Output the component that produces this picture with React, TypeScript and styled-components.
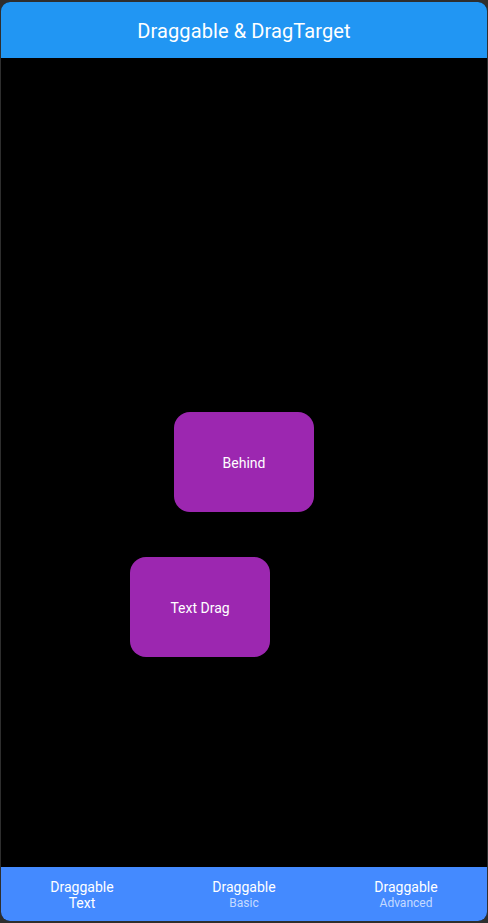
import React from "react";
import styled, { createGlobalStyle } from "styled-components";

const Global = createGlobalStyle`
  html, body { margin: 0; padding: 0; background: #2e2e2e; }
  body { font-family: Roboto, "Noto Sans", sans-serif; }
  #root { width: 488px; height: 923px; }
`;

const Frame = styled.div`
  box-sizing: border-box;
  width: 488px;
  height: 923px;
  padding: 2px 1px 2px 1px;
  background: #2e2e2e;
`;

const Screen = styled.div`
  height: 100%;
  display: flex;
  flex-direction: column;
  border-radius: 9px;
  overflow: hidden;
  background: #000;
`;

const AppBar = styled.header`
  box-sizing: border-box;
  height: 56px;
  flex: 0 0 56px;
  padding-top: 2px;
  background: #2196f3;
  display: flex;
  align-items: center;
  justify-content: center;
  color: #fff;
  font-size: 20px;
  font-weight: 400;
  letter-spacing: 0.1px;
`;

const Canvas = styled.main`
  flex: 1;
  position: relative;
  background: #000;
`;

const Tile = styled.div<{ $x: number; $y: number }>`
  position: absolute;
  left: ${(p) => p.$x}px;
  top: ${(p) => p.$y}px;
  width: 140px;
  height: 100px;
  border-radius: 16px;
  background: #9c27b0;
  color: #fff;
  font-size: 14px;
  display: flex;
  align-items: center;
  justify-content: center;
  padding-top: 1px;
  box-sizing: border-box;
`;

const NavBar = styled.nav`
  height: 54px;
  flex: 0 0 54px;
  background: #448aff;
  display: grid;
  grid-template-columns: repeat(3, 1fr);
`;

const NavItem = styled.div`
  display: flex;
  flex-direction: column;
  align-items: center;
  justify-content: center;
  padding-top: 3px;
`;

const NavTitle = styled.span`
  color: #fff;
  font-size: 14px;
  line-height: 16px;
`;

const NavSub = styled.span<{ $active?: boolean }>`
  color: ${(p) => (p.$active ? "#fff" : "rgba(255,255,255,0.7)")};
  font-size: ${(p) => (p.$active ? "14px" : "12px")};
  line-height: 17px;
`;

const tabs = [
  { sub: "Text", active: true },
  { sub: "Basic", active: false },
  { sub: "Advanced", active: false },
];

export default function App() {
  return (
    <>
      <Global />
      <Frame>
        <Screen>
          <AppBar>Draggable &amp; DragTarget</AppBar>
          <Canvas>
            <Tile $x={173} $y={354}>Behind</Tile>
            <Tile $x={129} $y={499}>Text Drag</Tile>
          </Canvas>
          <NavBar>
            {tabs.map((t) => (
              <NavItem key={t.sub}>
                <NavTitle>Draggable</NavTitle>
                <NavSub $active={t.active}>{t.sub}</NavSub>
              </NavItem>
            ))}
          </NavBar>
        </Screen>
      </Frame>
    </>
  );
}
